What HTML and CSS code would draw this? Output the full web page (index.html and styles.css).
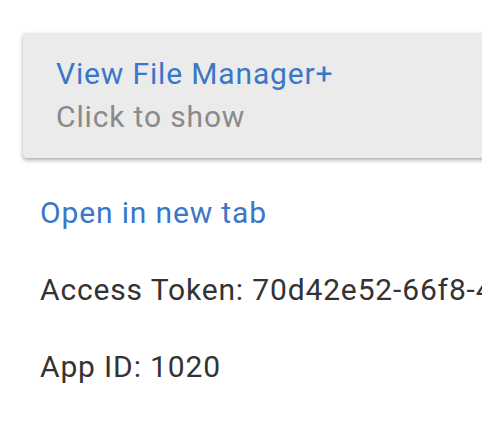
FILE: index.html
```html
<!DOCTYPE html>
<html>
<head>
<meta charset="utf-8">
<link rel="stylesheet" href="styles.css">
</head>
<body>
<div class="page">
  <div class="card">
    <div class="card-title">View File Manager+</div>
    <div class="card-sub">Click to show</div>
  </div>
  <div class="info">
    <a class="link" href="#">Open in new tab</a>
    <div class="row">Access Token: 70d42e52-66f8-4c3a-9b1e-2f7d8a6c5e41</div>
    <div class="row">App ID: 1020</div>
  </div>
</div>
</body>
</html>
```
FILE: styles.css
```css
html, body {
  margin: 0;
  padding: 0;
  background: #ffffff;
  overflow: hidden;
}
.page {
  font-family: Roboto, "Liberation Sans", sans-serif;
  font-size: 30px;
  line-height: 43px;
  letter-spacing: 0.85px;
  padding: 33px 0 0 23px;
  white-space: nowrap;
}
.card {
  width: 620px;
  background: #ebebeb;
  border-radius: 4px;
  box-shadow: 0 2px 4px rgba(0, 0, 0, 0.35);
  padding: 19px 32px 20px 33px;
}
.card-title {
  color: #3a77c6;
}
.card-sub {
  color: #8a8a8a;
}
.info {
  padding-left: 17px;
  padding-top: 33px;
  display: flex;
  flex-direction: column;
  gap: 34px;
  color: #333333;
}
.link {
  color: #3a77c6;
  text-decoration: none;
}
```
